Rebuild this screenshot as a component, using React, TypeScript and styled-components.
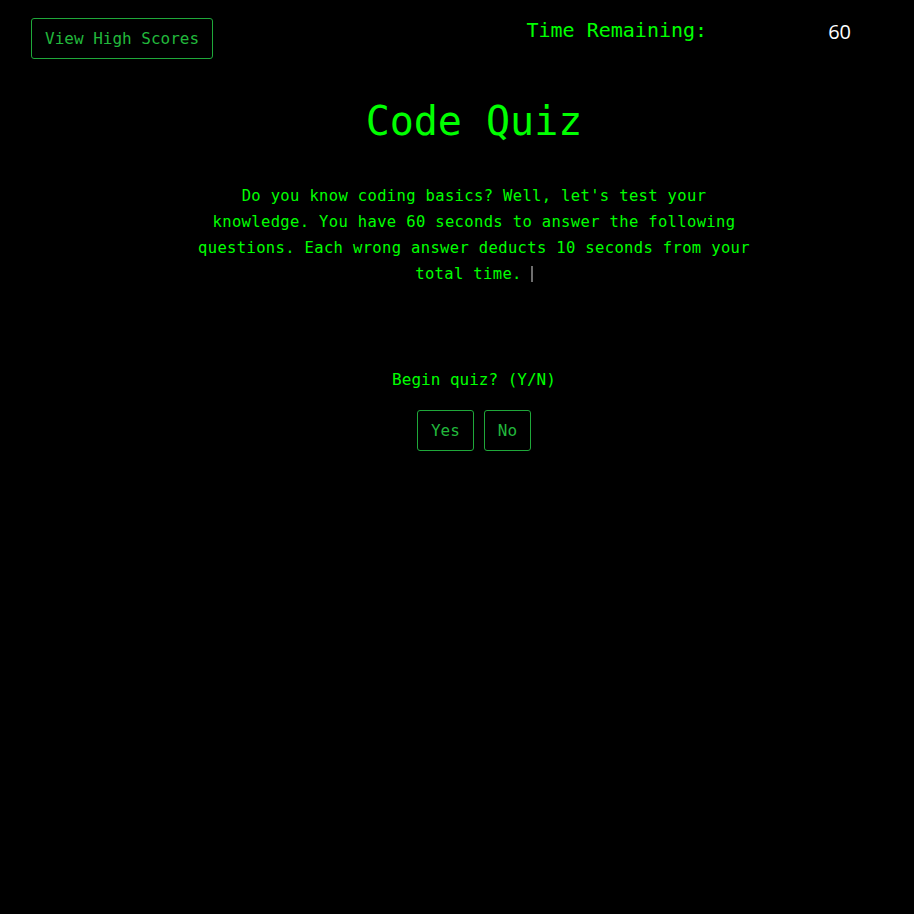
import styled, { createGlobalStyle } from "styled-components";
import React from "react";

const GlobalStyle = createGlobalStyle`
  html, body {
    margin: 0;
    background: #000;
  }
  body {
    font-family: "DejaVu Sans Mono", "Liberation Mono", monospace;
    color: #00ff00;
  }
`;

const StyledPage = styled.div`
  min-height: 914px;
  background: #000;
`;

const StyledHeader = styled.header`
  display: flex;
  justify-content: space-between;
  align-items: flex-start;
  padding: 18px 63px 0 31px;
`;

const StyledOutlineButton = styled.button`
  background: transparent;
  border: 1px solid #1fa83a;
  border-radius: 3px;
  color: #22b83c;
  font-family: "DejaVu Sans Mono", "Liberation Mono", monospace;
  font-size: 16px;
  height: 41px;
  padding: 0 13px;
  cursor: pointer;
`;

const StyledTimer = styled.div`
  display: flex;
  align-items: flex-start;
  gap: 121px;
  margin-top: -1px;
`;

const StyledTimerLabel = styled.span`
  font-size: 20px;
  line-height: 26px;
  color: #00ff00;
`;

const StyledTimerValue = styled.span`
  font-family: "Open Sans", "Liberation Sans", sans-serif;
  font-size: 20px;
  line-height: 26px;
  margin-top: 2px;
  color: #fff;
`;

const StyledMain = styled.main`
  display: flex;
  flex-direction: column;
  align-items: center;
  padding-left: 34px;
  text-align: center;
`;

const StyledTitle = styled.h1`
  margin: 38px 0 0;
  font-size: 40px;
  font-weight: normal;
  line-height: 48px;
  color: #00ff00;
`;

const StyledIntro = styled.p`
  max-width: 560px;
  margin: 38px 0 0;
  font-size: 15.5px;
  line-height: 26px;
  letter-spacing: 0.35px;
  color: #00ff00;
`;

const StyledCaret = styled.span`
  display: inline-block;
  width: 2px;
  height: 16px;
  margin-left: 9px;
  vertical-align: -3px;
  background: #6e6e6e;
`;

const StyledPrompt = styled.p`
  margin: 80px 0 0;
  font-size: 16px;
  line-height: 26px;
  color: #00ff00;
`;

const StyledChoiceRow = styled.div`
  display: flex;
  gap: 10px;
  margin-top: 17px;
`;

const App = () => {
  const [seconds] = React.useState<number>(60);

  return (
    <StyledPage>
      <GlobalStyle />
      <StyledHeader>
        <StyledOutlineButton>View High Scores</StyledOutlineButton>
        <StyledTimer>
          <StyledTimerLabel>Time Remaining:</StyledTimerLabel>
          <StyledTimerValue>{seconds}</StyledTimerValue>
        </StyledTimer>
      </StyledHeader>
      <StyledMain>
        <StyledTitle>Code Quiz</StyledTitle>
        <StyledIntro>
          Do you know coding basics? Well, let's test your knowledge. You have
          60 seconds to answer the following questions. Each wrong answer
          deducts 10 seconds from your total time.
          <StyledCaret />
        </StyledIntro>
        <StyledPrompt>Begin quiz? (Y/N)</StyledPrompt>
        <StyledChoiceRow>
          <StyledOutlineButton>Yes</StyledOutlineButton>
          <StyledOutlineButton>No</StyledOutlineButton>
        </StyledChoiceRow>
      </StyledMain>
    </StyledPage>
  );
};

export default App;
